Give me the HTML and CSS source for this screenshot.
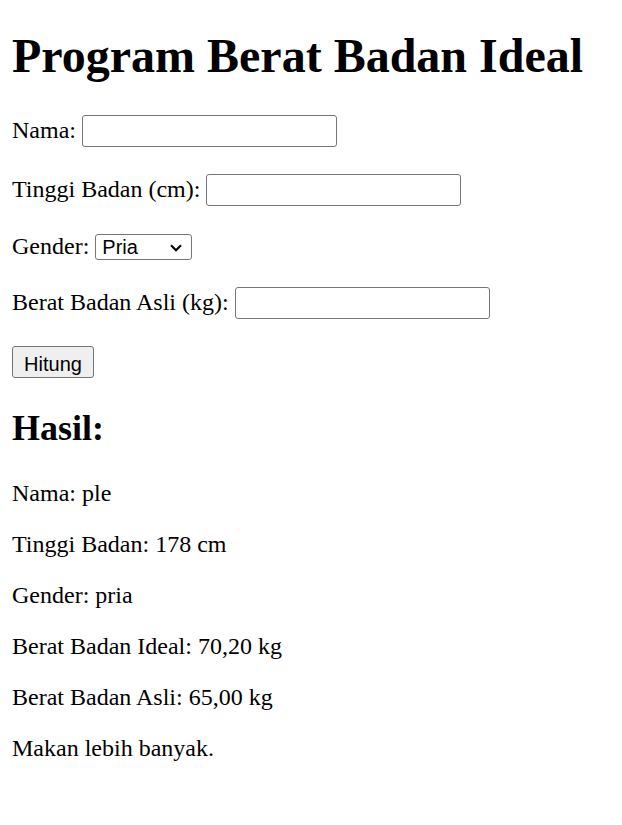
FILE: index.html
```html
<!DOCTYPE html>
<html>
<head>
<meta charset="utf-8">
<title>Program Berat Badan Ideal</title>
<link rel="stylesheet" href="styles.css">
</head>
<body>
<h1 class="title">Program Berat Badan Ideal</h1>
<form class="form">
  <div class="row"><label class="label">Nama:</label><input class="field" type="text"></div>
  <div class="row"><label class="label">Tinggi Badan (cm):</label><input class="field" type="text"></div>
  <div class="row row-select"><label class="label">Gender:</label><span class="select-wrap"><select class="select"><option>Pria</option><option>Wanita</option></select><svg class="chevron" width="12" height="8" viewBox="0 0 12 8"><polyline points="1,1.2 6,6.2 11,1.2" fill="none" stroke="#000" stroke-width="2.2"/></svg></span></div>
  <div class="row"><label class="label">Berat Badan Asli (kg):</label><input class="field" type="text"></div>
  <div class="row row-btn"><button class="btn" type="button">Hitung</button></div>
</form>
<h2 class="subtitle">Hasil:</h2>
<p class="line">Nama: ple</p>
<p class="line">Tinggi Badan: 178 cm</p>
<p class="line">Gender: pria</p>
<p class="line">Berat Badan Ideal: 70,20 kg</p>
<p class="line">Berat Badan Asli: 65,00 kg</p>
<p class="line">Makan lebih banyak.</p>
</body>
</html>
```

FILE: styles.css
```css
html {
  background: #fff;
}
body {
  margin: 0;
  padding: 29px 12px 12px;
  font-family: "Liberation Serif", "Times New Roman", serif;
  font-size: 24px;
  line-height: 27px;
  color: #000;
}
.title {
  font-size: 48px;
  line-height: 53px;
  font-weight: bold;
  margin: 0 0 32px;
}
.form {
  margin: 0;
}
.row {
  display: flex;
  align-items: flex-start;
  gap: 6px;
  margin: 24px 0;
}
.label {
  margin-top: 3px;
}
.row-select .label {
  margin-top: 1px;
}
.field {
  box-sizing: border-box;
  width: 255px;
  height: 32px;
  margin: 1px 0 2px;
  border: 1px solid #767676;
  border-radius: 3px;
  padding: 1px 3px;
  font-family: "Liberation Sans", Arial, sans-serif;
  font-size: 20px;
  background: #fff;
}
.select-wrap {
  position: relative;
  display: block;
  margin: 2px 0 2px;
  height: 26px;
}
.select {
  -webkit-appearance: none;
  appearance: none;
  display: block;
  box-sizing: border-box;
  width: 97px;
  height: 26px;
  margin: 0;
  border: 1px solid #767676;
  border-radius: 3px;
  padding: 1px 0 0 6px;
  font-family: "Liberation Sans", Arial, sans-serif;
  font-size: 20px;
  line-height: 23px;
  background: #fff;
  color: #000;
}
.chevron {
  position: absolute;
  left: 75px;
  top: 10px;
  pointer-events: none;
}
.btn {
  box-sizing: border-box;
  width: 82px;
  height: 32px;
  margin-top: 1px;
  border: 1px solid #767676;
  border-radius: 3px;
  background: #efefef;
  font-family: "Liberation Sans", Arial, sans-serif;
  font-size: 20px;
  line-height: 23px;
  color: #000;
  padding: 5px 0 0;
}
.subtitle {
  font-size: 36px;
  line-height: 41px;
  font-weight: bold;
  margin: 30px 0 31px;
}
.line {
  margin: 24px 0;
}
```
